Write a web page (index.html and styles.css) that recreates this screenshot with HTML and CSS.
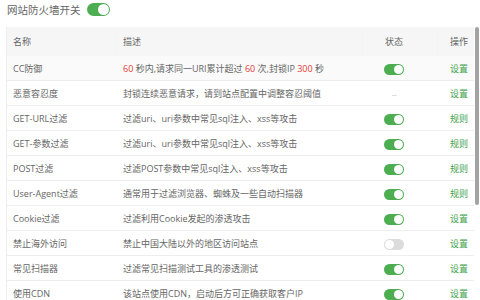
FILE: index.html
```html
<!DOCTYPE html>
<html lang="zh-CN">
<head>
  <meta charset="UTF-8" />
  <title>网站防火墙</title>
  <link rel="stylesheet" href="styles.css">
</head>
<body>
  <div class="waf-top">
    <span class="waf-title">网站防火墙开关</span>
    <span class="switch big on"></span>
  </div>

  <div class="table-box">
    <table class="waf-table">
      <thead>
        <tr><th class="c-name">名称</th><th>描述</th><th class="c-state">状态</th><th class="c-op">操作</th></tr>
      </thead>
      <tbody>
        <tr class="hover">
          <td>CC防御</td>
          <td><em>60</em> 秒内,请求同一URI累计超过 <em>60</em> 次,封锁IP <em>300</em> 秒</td>
          <td class="c-state"><span class="switch on"></span></td>
          <td class="c-op"><a>设置</a></td>
        </tr>
        <tr>
          <td>恶意容忍度</td>
          <td>封锁连续恶意请求，请到站点配置中调整容忍阈值</td>
          <td class="c-state"><span class="dash">--</span></td>
          <td class="c-op"><a>设置</a></td>
        </tr>
        <tr>
          <td>GET-URL过滤</td>
          <td>过滤uri、uri参数中常见sql注入、xss等攻击</td>
          <td class="c-state"><span class="switch on"></span></td>
          <td class="c-op"><a>规则</a></td>
        </tr>
        <tr>
          <td>GET-参数过滤</td>
          <td>过滤uri、uri参数中常见sql注入、xss等攻击</td>
          <td class="c-state"><span class="switch on"></span></td>
          <td class="c-op"><a>规则</a></td>
        </tr>
        <tr>
          <td>POST过滤</td>
          <td>过滤POST参数中常见sql注入、xss等攻击</td>
          <td class="c-state"><span class="switch on"></span></td>
          <td class="c-op"><a>规则</a></td>
        </tr>
        <tr>
          <td>User-Agent过滤</td>
          <td>通常用于过滤浏览器、蜘蛛及一些自动扫描器</td>
          <td class="c-state"><span class="switch on"></span></td>
          <td class="c-op"><a>规则</a></td>
        </tr>
        <tr>
          <td>Cookie过滤</td>
          <td>过滤利用Cookie发起的渗透攻击</td>
          <td class="c-state"><span class="switch on"></span></td>
          <td class="c-op"><a>设置</a></td>
        </tr>
        <tr>
          <td>禁止海外访问</td>
          <td>禁止中国大陆以外的地区访问站点</td>
          <td class="c-state"><span class="switch"></span></td>
          <td class="c-op"><a>设置</a></td>
        </tr>
        <tr>
          <td>常见扫描器</td>
          <td>过滤常见扫描测试工具的渗透测试</td>
          <td class="c-state"><span class="switch on"></span></td>
          <td class="c-op"><a>设置</a></td>
        </tr>
        <tr>
          <td>使用CDN</td>
          <td>该站点使用CDN，启动后方可正确获取客户IP</td>
          <td class="c-state"><span class="switch on"></span></td>
          <td class="c-op"><a>设置</a></td>
        </tr>
      </tbody>
    </table>
    <span class="scroll-thumb"></span>
  </div>
</body>
</html>
```

FILE: styles.css
```css
/* WAF site settings panel */
body {
  margin: 0;
  font-family: "Open Sans", "Noto Sans CJK SC", sans-serif;
  color: #666;
  background: #fff;
  overflow: hidden;
}

.waf-top {
  display: flex;
  align-items: center;
  gap: 6px;
  height: 18px;
  padding: 0 7px;
}

.waf-title {
  font-size: 10.5px;
}

.switch {
  position: relative;
  display: inline-block;
  width: 20px;
  height: 11px;
  border-radius: 6px;
  background: #dcdcdc;
  vertical-align: middle;
}

.switch::after {
  content: "";
  position: absolute;
  top: 1px;
  left: 1px;
  width: 9px;
  height: 9px;
  border-radius: 50%;
  background: #fff;
}

.switch.on {
  background: #4cae51;
}

.switch.on::after {
  left: 10px;
}

.switch.big {
  width: 23px;
  height: 13px;
  border-radius: 7px;
}

.switch.big::after {
  width: 11px;
  height: 11px;
}

.switch.big.on::after {
  left: 11px;
}

.table-box {
  position: relative;
  margin: 9px 0 0 6px;
  padding-right: 6px;
  height: 290px;
  overflow: hidden;
  border-left: 1px solid #eee;
}

/* the panel's scrollbar thumb */
.scroll-thumb {
  position: absolute;
  top: 0;
  right: 1px;
  width: 4px;
  height: 178px;
  border-radius: 2px;
  background: #a3a3a3;
}

.waf-table {
  width: 100%;
  border-collapse: collapse;
  font-size: 9px;
}

.waf-table th {
  height: 29px;
  padding: 0 6px;
  background: #f6f6f6;
  font-weight: normal;
  text-align: left;
  box-shadow: 0 1px 1px rgba(0,0,0,0.06);
}

.waf-table td {
  height: 24px;
  padding: 0 6px;
  border-bottom: 1px solid #eee;
  white-space: nowrap;
}

.waf-table .c-name {
  width: 98px;
}

.waf-table .c-state {
  width: 50px;
  text-align: center;
  padding-right: 19px;
}

.waf-table .c-op {
  width: 24px;
  text-align: right;
  padding-right: 6px;
}

.waf-table tr.hover td {
  background: #fafafa;
}

.waf-table em {
  font-style: normal;
  color: #e53935;
}

.waf-table a {
  color: #3fa34d;
}

.dash {
  color: #bbb;
  font-size: 8px;
}
```
